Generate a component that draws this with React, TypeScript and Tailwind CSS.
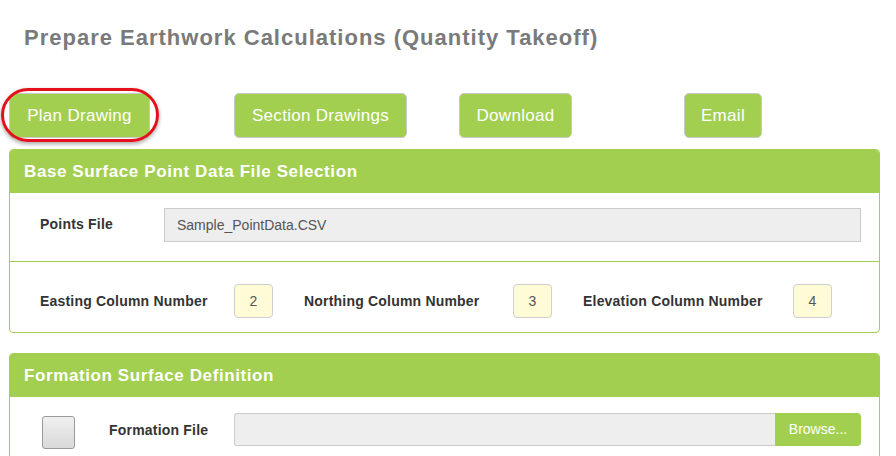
import React from "react";

const green = "bg-[#a2cf50]";

function NavButton({ label, w }: { label: string; w: string }) {
  return (
    <button
      className={`${w} h-[45px] rounded-[5px] border border-[#c9c9c9] bg-[#a2cf50] text-white text-[17px] tracking-[0.3px] leading-none flex items-center justify-center`}
    >
      {label}
    </button>
  );
}

function NumBox({ v }: { v: string }) {
  return (
    <div className="w-[39px] h-[34px] rounded-[4px] border border-[#cfcfcf] bg-[#fffbd6] flex items-center justify-center text-[14px] text-[#555]">
      {v}
    </div>
  );
}

export default function App() {
  return (
    <div
      className="w-[896px] h-[456px] overflow-hidden bg-white"
      style={{ fontFamily: '"Liberation Sans", Arial, sans-serif' }}
    >
      <h1 className="pt-[25px] pl-[24px] text-[22px] leading-[26px] font-bold tracking-[1px] text-[#7a7a7a]">
        Prepare Earthwork Calculations (Quantity Takeoff)
      </h1>

      <div className="mt-[42px] ml-[9px] grid grid-cols-[225px_225px_225px_225px] justify-items-start">
        <div className="relative">
          <NavButton label="Plan Drawing" w="w-[141px]" />
          <div className="absolute -left-[8px] -top-[5px] w-[158px] h-[54px] rounded-[27px] border-[3px] border-[#e3111b] shadow-[0_2px_4px_rgba(0,0,0,0.35)] pointer-events-none" />
        </div>
        <NavButton label="Section Drawings" w="w-[173px]" />
        <NavButton label="Download" w="w-[113px]" />
        <NavButton label="Email" w="w-[78px]" />
      </div>

      <div className="mt-[11px] ml-[9px] w-[871px] rounded-[4px] border border-[#a2cf50] overflow-hidden">
        <div className={`${green} h-[43px] flex items-center pl-[14px] text-white font-bold text-[17px] tracking-[0.6px]`}>
          Base Surface Point Data File Selection
        </div>
        <div className="h-[69px] flex items-center border-b border-[#a2cf50] pl-[30px]">
          <div className="w-[124px] -mt-[6px] text-[14px] font-bold tracking-[0.2px] text-[#333]">Points File</div>
          <div className="w-[697px] h-[34px] -mt-[4px] border border-[#cccccc] bg-[#eeeeee] flex items-center pl-[12px] text-[14px] text-[#555]">
            Sample_PointData.CSV
          </div>
        </div>
        <div className="h-[70px] flex items-center pl-[30px] pt-[8px]">
          <div className="w-[194px] text-[14px] font-bold tracking-[0.2px] text-[#333]">Easting Column Number</div>
          <NumBox v="2" />
          <div className="ml-[31px] w-[209px] text-[14px] font-bold tracking-[0.2px] text-[#333]">Northing Column Number</div>
          <NumBox v="3" />
          <div className="ml-[31px] w-[210px] text-[14px] font-bold tracking-[0.2px] text-[#333]">Elevation Column Number</div>
          <NumBox v="4" />
        </div>
      </div>

      <div className="mt-[20px] ml-[9px] w-[871px] rounded-[4px] border border-[#a2cf50] overflow-hidden">
        <div className={`${green} h-[43px] flex items-center pl-[14px] text-white font-bold text-[17px] tracking-[0.6px]`}>
          Formation Surface Definition
        </div>
        <div className="h-[70px] flex items-start pl-[32px] pt-[16px]">
          <div className="mt-[3px] w-[33px] h-[33px] rounded-[3px] border border-[#9a9a9a] bg-gradient-to-b from-[#f0f0f0] to-[#d9d9d9]" />
          <div className="ml-[34px] w-[125px] mt-[7px] text-[14px] font-bold tracking-[0.2px] text-[#333]">Formation File</div>
          <div className="flex w-[627px] h-[33px]">
            <div className="flex-1 border border-[#cccccc] border-r-0 bg-[#eeeeee] rounded-l-[3px]" />
            <div className="w-[86px] bg-[#a2cf50] rounded-r-[4px] flex items-center justify-center text-white text-[14px]">
              Browse...
            </div>
          </div>
        </div>
      </div>
    </div>
  );
}
